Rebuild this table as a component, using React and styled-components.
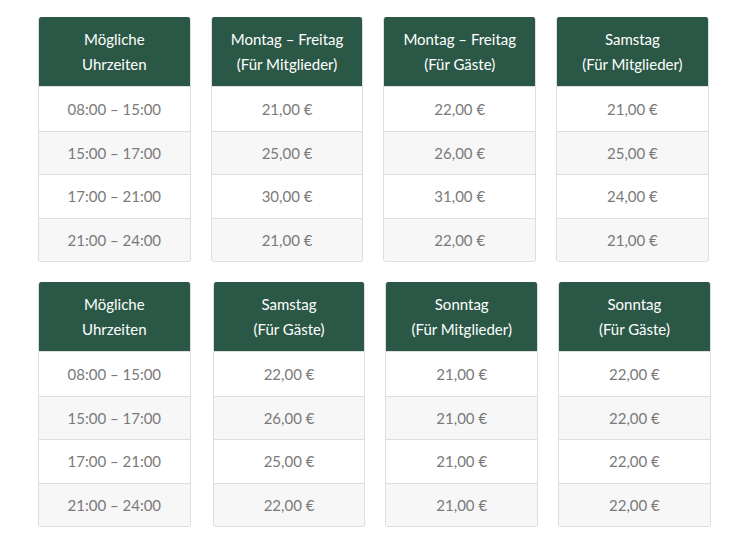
import React from 'react'
import styled, { createGlobalStyle } from 'styled-components'

const GlobalStyle = createGlobalStyle`
  body {
    margin: 0;
    background: #fff;
    font-family: Lato, "Open Sans", sans-serif;
  }
`

const Page = styled.div`
  display: flex;
  flex-direction: column;
  gap: 20px;
  padding: 17px 0 0 38px;
`

const Row = styled.div`
  display: flex;
  gap: 20px;
`

const Table = styled.div`
  display: flex;
  flex-direction: column;
  width: 152.7px;
  margin-right: ${({ $extra }) => $extra || 0}px;
  border: 1px solid #dedede;
  border-top: none;
  border-radius: 3px;
  overflow: hidden;
  box-sizing: border-box;
`

const Head = styled.div`
  display: flex;
  flex-direction: column;
  align-items: center;
  justify-content: center;
  height: 70px;
  margin: 0 -1px;
  background: #2b5846;
  color: #fff;
  font-size: 15px;
  line-height: 25px;
  text-align: center;
  border-bottom: 1px solid #dedede;
  box-sizing: border-box;
`

const Cell = styled.div`
  display: flex;
  align-items: center;
  justify-content: center;
  height: 43.5px;
  background: ${({ $alt }) => ($alt ? '#f7f7f7' : '#fff')};
  color: #7a7a7a;
  font-size: 15px;
  border-top: ${({ $first }) => ($first ? 'none' : '1px solid #dedede')};
  box-sizing: border-box;
`

const times = ['08:00 – 15:00', '15:00 – 17:00', '17:00 – 21:00', '21:00 – 24:00']

const rows = [
  [
    { title: ['Mögliche', 'Uhrzeiten'], values: times },
    { title: ['Montag – Freitag', '(Für Mitglieder)'], values: ['21,00 €', '25,00 €', '30,00 €', '21,00 €'] },
    { title: ['Montag – Freitag', '(Für Gäste)'], values: ['22,00 €', '26,00 €', '31,00 €', '22,00 €'] },
    { title: ['Samstag', '(Für Mitglieder)'], values: ['21,00 €', '25,00 €', '24,00 €', '21,00 €'] },
  ],
  [
    { title: ['Mögliche', 'Uhrzeiten'], values: times, extra: 2 },
    { title: ['Samstag', '(Für Gäste)'], values: ['22,00 €', '26,00 €', '25,00 €', '22,00 €'] },
    { title: ['Sonntag', '(Für Mitglieder)'], values: ['21,00 €', '21,00 €', '21,00 €', '21,00 €'] },
    { title: ['Sonntag', '(Für Gäste)'], values: ['22,00 €', '22,00 €', '22,00 €', '22,00 €'] },
  ],
]

function PriceTable({ title, values, extra }) {
  return (
    <Table $extra={extra}>
      <Head>
        {title.map(line => (
          <span key={line}>{line}</span>
        ))}
      </Head>
      {values.map((v, i) => (
        <Cell key={i} $alt={i % 2 === 1} $first={i === 0}>
          {v}
        </Cell>
      ))}
    </Table>
  )
}

export default function App() {
  return (
    <>
      <GlobalStyle />
      <Page>
        {rows.map((row, r) => (
          <Row key={r}>
            {row.map((t, i) => (
              <PriceTable key={i} {...t} />
            ))}
          </Row>
        ))}
      </Page>
    </>
  )
}
